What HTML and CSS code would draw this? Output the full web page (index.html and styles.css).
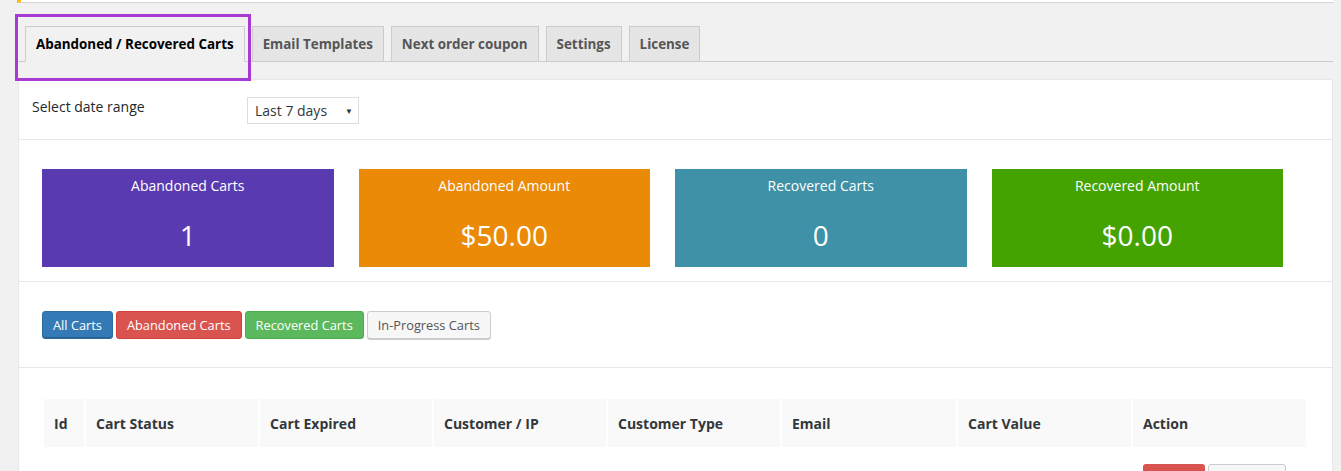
FILE: index.html
```html
<!DOCTYPE html>
<html>
<head>
<meta charset="utf-8">
<link rel="stylesheet" href="styles.css">
</head>
<body>
<div class="wrap">
  <div class="notice"></div>
  <nav class="tabs">
    <a class="tab active">Abandoned / Recovered Carts</a>
    <a class="tab">Email Templates</a>
    <a class="tab">Next order coupon</a>
    <a class="tab">Settings</a>
    <a class="tab">License</a>
    <span class="highlight"></span>
  </nav>
  <div class="panel">
    <div class="row date-row">
      <label class="date-label">Select date range</label>
      <div class="select">
        <span>Last 7 days</span>
        <span class="arrow">&#9660;</span>
      </div>
    </div>
    <div class="row cards-row">
      <div class="card purple"><div class="card-title">Abandoned Carts</div><div class="card-value">1</div></div>
      <div class="card orange"><div class="card-title">Abandoned Amount</div><div class="card-value">$50.00</div></div>
      <div class="card teal"><div class="card-title">Recovered Carts</div><div class="card-value">0</div></div>
      <div class="card green"><div class="card-title">Recovered Amount</div><div class="card-value">$0.00</div></div>
    </div>
    <div class="row btn-row">
      <button class="btn btn-primary">All Carts</button>
      <button class="btn btn-danger">Abandoned Carts</button>
      <button class="btn btn-success">Recovered Carts</button>
      <button class="btn btn-default">In-Progress Carts</button>
    </div>
    <div class="row table-row">
      <table class="carts">
        <thead>
          <tr>
            <th class="c-id">Id</th>
            <th class="c-md">Cart Status</th>
            <th class="c-md">Cart Expired</th>
            <th class="c-md">Customer / IP</th>
            <th class="c-md">Customer Type</th>
            <th class="c-lg">Email</th>
            <th class="c-lg2">Cart Value</th>
            <th class="c-lg2">Action</th>
          </tr>
        </thead>
        <tbody>
          <tr>
            <td></td><td></td><td></td><td></td><td></td><td></td><td></td>
            <td class="actions"><span class="act act-red"></span><span class="act act-white"></span></td>
          </tr>
        </tbody>
      </table>
    </div>
  </div>
</div>
</body>
</html>
```

FILE: styles.css
```css
html, body {
  margin: 0;
  padding: 0;
}
body {
  background: #f1f1f1;
  font-family: "Open Sans", "Liberation Sans", sans-serif;
  font-size: 14px;
  color: #23282d;
  overflow: hidden;
  height: 471px;
}
.wrap {
  margin: 0 8px 0 17px;
}
.notice {
  height: 2px;
  background: #fff;
  border-left: 4px solid #ffb900;
  border-bottom: 1px solid #d5d5d5;
}
.tabs {
  position: relative;
  display: flex;
  margin-left: 1px;
  padding-top: 23px;
  border-bottom: 1px solid #ccc;
}
.tab {
  display: block;
  margin-left: 7px;
  margin-bottom: -1px;
  padding: 5px 10px;
  line-height: 24px;
  font-size: 13.4px;
  font-weight: 700;
  color: #555;
  background: #e5e5e5;
  border: 1px solid #ccc;
}
.tab.active {
  color: #000;
  background: #f1f1f1;
  border-bottom-color: #f1f1f1;
}
.highlight {
  position: absolute;
  left: -3px;
  top: 11px;
  width: 230px;
  height: 61px;
  border: 3px solid #a63ad3;
}
.panel {
  margin-top: 17px;
  margin-left: 1px;
  background: #fff;
  border: 1px solid #e8e8e8;
  border-bottom: none;
}
.row {
  border-bottom: 1px solid #e8e8e8;
}
.date-row {
  display: flex;
  align-items: flex-start;
  height: 59px;
  padding-left: 13px;
}
.date-label {
  width: 215px;
  margin-top: 17px;
  line-height: 20px;
  color: #23282d;
}
.select {
  box-sizing: border-box;
  display: flex;
  align-items: center;
  justify-content: space-between;
  width: 112px;
  height: 27px;
  padding: 0 5px 0 7px;
  border: 1px solid #ddd;
  color: #32373c;
  margin-top: 17px;
}
.arrow {
  font-size: 8px;
  color: #333;
}
.cards-row {
  display: grid;
  grid-template-columns: repeat(4, 1fr);
  column-gap: 25px;
  padding: 29px 49px 14px 23px;
}
.card {
  height: 98px;
  color: #fff;
  text-align: center;
}
.card-title {
  padding-top: 7px;
  line-height: 20px;
  font-size: 14px;
}
.card-value {
  margin-top: 19px;
  font-size: 28px;
  line-height: 40px;
}
.purple { background: #5a3ab1; }
.orange { background: #ea8a06; }
.teal { background: #3e91a6; }
.green { background: #44a301; }
.btn-row {
  display: flex;
  gap: 3px;
  padding: 29px 0 28px 23px;
}
.btn {
  box-sizing: border-box;
  height: 28px;
  padding: 1px 10px 0;
  font-family: inherit;
  font-size: 12.8px;
  line-height: 25px;
  border-radius: 3px;
  border: 1px solid;
  color: #fff;
  cursor: pointer;
}
.btn-primary { background: #337ab7; border-color: #2e6da4; box-shadow: inset 0 -1px 0 #255d8d; }
.btn-danger { background: #d9534f; border-color: #d43f3a; }
.btn-success { background: #5cb85c; border-color: #4cae4c; }
.btn-default { background: #f7f7f7; border-color: #ccc; color: #555; box-shadow: 0 1px 0 #ccc; }
.table-row {
  border-bottom: none;
  padding: 29px 24px 0 23px;
}
.carts {
  width: 100%;
  border-spacing: 2px;
}
.carts th {
  height: 48px;
  padding: 0 0 0 10px;
  text-align: left;
  background: #f9f9f9;
  color: #32373c;
  font-weight: 700;
  font-size: 14px;
}
.c-id { width: 30px; }
.c-md { width: 162px; }
.c-lg { width: 164px; }
.c-lg2 { width: 163px; }
.carts td {
  padding: 15px 0 0 10px;
  height: 30px;
  vertical-align: top;
}
.actions {
  display: flex;
  gap: 3px;
}
.act {
  display: block;
  height: 28px;
  border-radius: 3px;
}
.act-red { width: 62px; background: #d9534f; }
.act-white { width: 78px; background: #f7f7f7; border: 1px solid #ccc; box-sizing: border-box; }
```
